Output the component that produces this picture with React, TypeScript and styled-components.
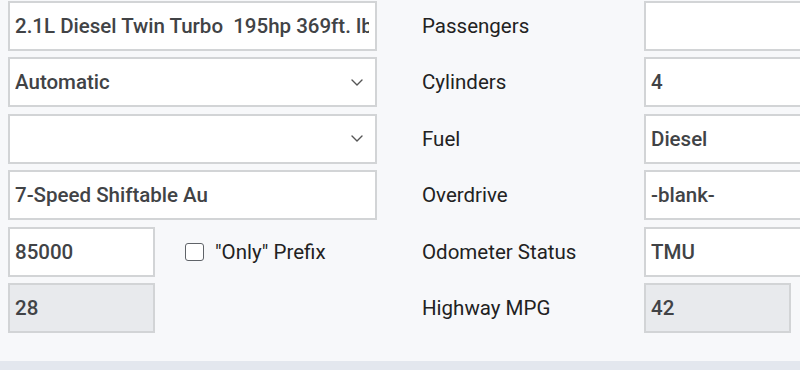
import React from "react";
import styled, { createGlobalStyle } from "styled-components";

const Global = createGlobalStyle`
  html, body { margin: 0; padding: 0; background: #f7f8fa; }
  body { font-family: Roboto, "Noto Sans", Arial, sans-serif; overflow: hidden; }
`;

const Page = styled.div`
  width: 800px;
  height: 370px;
  background: #f7f8fa;
  display: flex;
  flex-direction: column;
  overflow: hidden;
`;

const Form = styled.div`
  flex: 1;
  display: grid;
  grid-template-columns: 369px 267px 369px;
  row-gap: 6.4px;
  grid-auto-rows: 50px;
  padding: 1px 0 0 8px;
`;

const Cell = styled.div`
  display: flex;
  align-items: center;
  min-width: 0;
`;

const Label = styled.div`
  padding-left: 45px;
  font-size: 20.5px;
  color: #222;
  display: flex;
  align-items: center;
`;

const Field = styled.div<{ $w?: number; $disabled?: boolean }>`
  box-sizing: border-box;
  width: ${(p) => (p.$w ? `${p.$w}px` : "100%")};
  height: 50px;
  border: 2px solid #d2d4d6;
  background: ${(p) => (p.$disabled ? "#e8eaed" : "#fff")};
  display: flex;
  align-items: center;
  padding: 0 6px 0 5px;
  font-size: 20.5px;
  font-weight: 500;
  color: #414346;
  white-space: pre;
  overflow: hidden;
  flex-shrink: 0;
`;

const Value = styled.span`
  flex: 1;
  overflow: hidden;
`;

const Chevron = styled.svg`
  width: 12px;
  height: 7px;
  margin-right: 6px;
  flex-shrink: 0;
`;

const Check = styled.label`
  display: flex;
  align-items: center;
  gap: 11px;
  margin-left: 30px;
  font-size: 20.5px;
  color: #222;
`;

const Box = styled.span`
  box-sizing: border-box;
  width: 19px;
  height: 18px;
  border: 1.6px solid #5f6368;
  border-radius: 3px;
  background: #fff;
`;

const BottomBar = styled.div`
  height: 9px;
  background: #e3e7ee;
`;

const Select = ({ value }: { value: string }) => (
  <Field>
    <Value>{value}</Value>
    <Chevron viewBox="0 0 12 7">
      <path d="M1 1l5 5 5-5" fill="none" stroke="#555" strokeWidth="1.4" strokeLinecap="round" strokeLinejoin="round" />
    </Chevron>
  </Field>
);

export default function App() {
  return (
    <Page>
      <Global />
      <Form>
        <Cell><Field><Value>2.1L Diesel Twin Turbo  195hp 369ft. lb</Value></Field></Cell>
        <Label>Passengers</Label>
        <Cell><Field><Value></Value></Field></Cell>

        <Cell><Select value="Automatic" /></Cell>
        <Label>Cylinders</Label>
        <Cell><Field><Value>4</Value></Field></Cell>

        <Cell><Select value="" /></Cell>
        <Label>Fuel</Label>
        <Cell><Field><Value>Diesel</Value></Field></Cell>

        <Cell><Field><Value>7-Speed Shiftable Au</Value></Field></Cell>
        <Label>Overdrive</Label>
        <Cell><Field><Value>-blank-</Value></Field></Cell>

        <Cell>
          <Field $w={147}><Value>85000</Value></Field>
          <Check><Box />"Only" Prefix</Check>
        </Cell>
        <Label>Odometer Status</Label>
        <Cell><Field><Value>TMU</Value></Field></Cell>

        <Cell><Field $w={147} $disabled><Value>28</Value></Field></Cell>
        <Label>Highway MPG</Label>
        <Cell><Field $w={147} $disabled><Value>42</Value></Field></Cell>
      </Form>
      <BottomBar />
    </Page>
  );
}
